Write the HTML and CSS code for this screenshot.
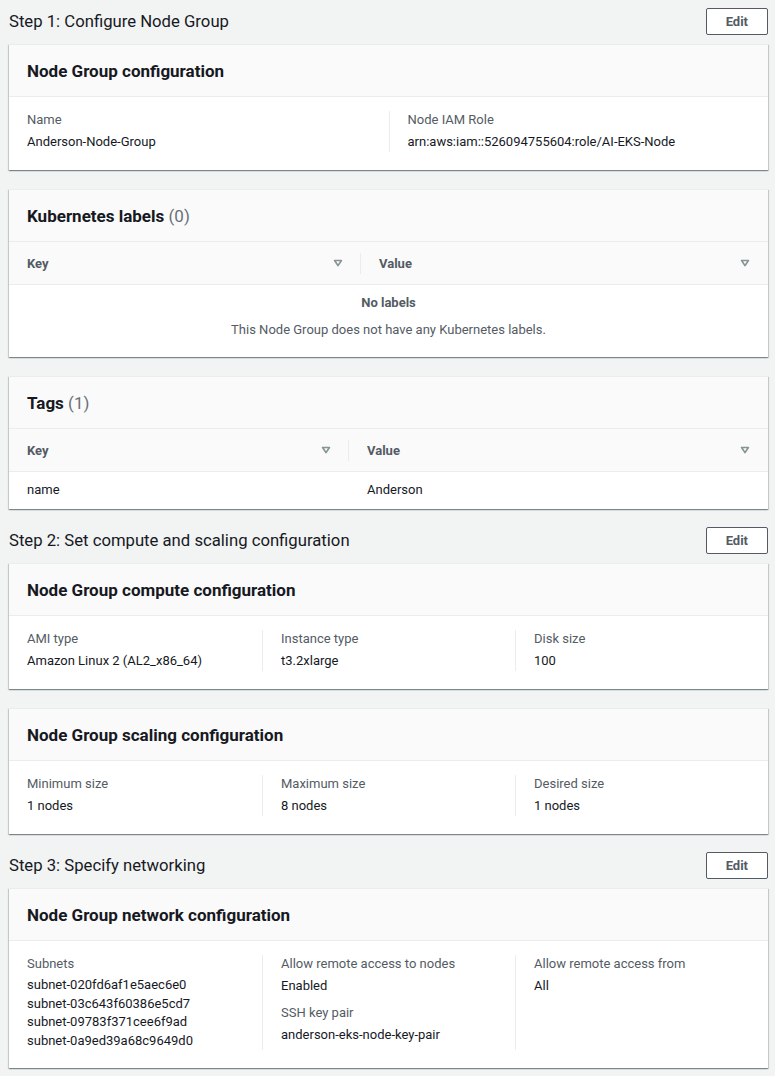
FILE: index.html
```html
<!DOCTYPE html>
<html lang="en">
<head>
<meta charset="utf-8">
<title>Review Node Group</title>
<link rel="stylesheet" href="styles.css">
</head>
<body>
<div class="page">

  <section class="step">
    <div class="step-head">
      <h2 class="step-title">Step 1: Configure Node Group</h2>
      <button class="btn">Edit</button>
    </div>
    <div class="cards">
      <div class="card">
        <div class="card-head"><h3 class="card-title">Node Group configuration</h3></div>
        <div class="cols cols-2">
          <div class="col">
            <div class="label">Name</div>
            <div class="value">Anderson-Node-Group</div>
          </div>
          <div class="col">
            <div class="label">Node IAM Role</div>
            <div class="value">arn:aws:iam::526094755604:role/AI-EKS-Node</div>
          </div>
        </div>
      </div>

      <div class="card">
        <div class="card-head"><h3 class="card-title">Kubernetes labels <span class="count">(0)</span></h3></div>
        <div class="table table-labels">
          <div class="trow thead">
            <div class="th">Key <svg class="sort" width="10" height="8" viewBox="0 0 10 8"><polygon points="1.6,1.5 8.4,1.5 5,6.6" fill="none" stroke="#879596" stroke-width="1.7" stroke-linejoin="round"/></svg></div>
            <div class="th">Value <svg class="sort" width="10" height="8" viewBox="0 0 10 8"><polygon points="1.6,1.5 8.4,1.5 5,6.6" fill="none" stroke="#879596" stroke-width="1.7" stroke-linejoin="round"/></svg></div>
          </div>
          <div class="empty">
            <div class="empty-title">No labels</div>
            <div class="empty-desc">This Node Group does not have any Kubernetes labels.</div>
          </div>
        </div>
      </div>

      <div class="card">
        <div class="card-head"><h3 class="card-title">Tags <span class="count">(1)</span></h3></div>
        <div class="table table-tags">
          <div class="trow thead">
            <div class="th">Key <svg class="sort" width="10" height="8" viewBox="0 0 10 8"><polygon points="1.6,1.5 8.4,1.5 5,6.6" fill="none" stroke="#879596" stroke-width="1.7" stroke-linejoin="round"/></svg></div>
            <div class="th">Value <svg class="sort" width="10" height="8" viewBox="0 0 10 8"><polygon points="1.6,1.5 8.4,1.5 5,6.6" fill="none" stroke="#879596" stroke-width="1.7" stroke-linejoin="round"/></svg></div>
          </div>
          <div class="trow">
            <div class="td">name</div>
            <div class="td">Anderson</div>
          </div>
        </div>
      </div>
    </div>
  </section>

  <section class="step">
    <div class="step-head">
      <h2 class="step-title">Step 2: Set compute and scaling configuration</h2>
      <button class="btn">Edit</button>
    </div>
    <div class="cards">
      <div class="card">
        <div class="card-head"><h3 class="card-title">Node Group compute configuration</h3></div>
        <div class="cols cols-3">
          <div class="col">
            <div class="label">AMI type</div>
            <div class="value">Amazon Linux 2 (AL2_x86_64)</div>
          </div>
          <div class="col">
            <div class="label">Instance type</div>
            <div class="value">t3.2xlarge</div>
          </div>
          <div class="col">
            <div class="label">Disk size</div>
            <div class="value">100</div>
          </div>
        </div>
      </div>

      <div class="card">
        <div class="card-head"><h3 class="card-title">Node Group scaling configuration</h3></div>
        <div class="cols cols-3">
          <div class="col">
            <div class="label">Minimum size</div>
            <div class="value">1 nodes</div>
          </div>
          <div class="col">
            <div class="label">Maximum size</div>
            <div class="value">8 nodes</div>
          </div>
          <div class="col">
            <div class="label">Desired size</div>
            <div class="value">1 nodes</div>
          </div>
        </div>
      </div>
    </div>
  </section>

  <section class="step">
    <div class="step-head">
      <h2 class="step-title">Step 3: Specify networking</h2>
      <button class="btn">Edit</button>
    </div>
    <div class="cards">
      <div class="card">
        <div class="card-head"><h3 class="card-title">Node Group network configuration</h3></div>
        <div class="cols cols-3">
          <div class="col">
            <div class="label">Subnets</div>
            <div class="value value-list">
              <div>subnet-020fd6af1e5aec6e0</div>
              <div>subnet-03c643f60386e5cd7</div>
              <div>subnet-09783f371cee6f9ad</div>
              <div>subnet-0a9ed39a68c9649d0</div>
            </div>
          </div>
          <div class="col">
            <div class="group">
              <div class="label">Allow remote access to nodes</div>
              <div class="value">Enabled</div>
            </div>
            <div class="group">
              <div class="label">SSH key pair</div>
              <div class="value">anderson-eks-node-key-pair</div>
            </div>
          </div>
          <div class="col">
            <div class="label">Allow remote access from</div>
            <div class="value">All</div>
          </div>
        </div>
      </div>
    </div>
  </section>

</div>
</body>
</html>
```

FILE: styles.css
```css
* {
  box-sizing: border-box;
}

body {
  margin: 0;
  background: #f2f3f3;
  font-family: Roboto, "Liberation Sans", sans-serif;
  font-size: 13px;
  color: #16191f;
}

.page {
  padding: 8px 7px 10px 9px;
}

.step + .step {
  margin-top: 18px;
}

.step-head {
  display: flex;
  align-items: center;
  justify-content: space-between;
  height: 27px;
  margin-bottom: 9px;
}

.step-title {
  margin: 0;
  font-size: 16.7px;
  font-weight: 400;
  line-height: 22px;
  color: #16191f;
}

.btn {
  height: 27px;
  padding: 0 19px;
  background: #fff;
  border: 1px solid #545b64;
  border-radius: 2px;
  font-family: Roboto, "Liberation Sans", sans-serif;
  font-size: 13px;
  font-weight: 700;
  line-height: 25px;
  color: #545b64;
}

.cards {
  display: flex;
  flex-direction: column;
  gap: 19px;
}

.card {
  background: #fff;
  border-top: 1px solid #eaeded;
  box-shadow: 0 1px 1px 0 rgba(0, 28, 36, 0.3), 1px 1px 1px 0 rgba(0, 28, 36, 0.15), -1px 1px 1px 0 rgba(0, 28, 36, 0.15);
}

.card-head {
  background: #fafafa;
  padding: 15px 18px 14px;
  border-bottom: 1px solid #eaeded;
}

.card-title {
  margin: 0;
  font-size: 17px;
  line-height: 22px;
  font-weight: 700;
  color: #16191f;
}

.count {
  font-weight: 400;
  color: #687078;
}

.cols {
  display: grid;
  padding: 14px 0 18px;
}

.cols-2 {
  grid-template-columns: 1fr 1fr;
}

.cols-3 {
  grid-template-columns: repeat(3, 1fr);
}

.col {
  padding: 0 18px;
}

.col + .col {
  border-left: 1px solid #eaeded;
}

.label {
  color: #545b64;
  line-height: 18px;
  margin-bottom: 3px;
}

.value {
  line-height: 20px;
}

.value-list {
  line-height: 18.5px;
}

.group + .group {
  margin-top: 8px;
}

.table-labels {
  --keyw: 352px;
}

.table-tags {
  --keyw: 340px;
}

.trow {
  display: grid;
  grid-template-columns: var(--keyw) 1fr;
}

.thead {
  background: #fafafa;
  border-bottom: 1px solid #eaeded;
}

.th {
  height: 42px;
  display: flex;
  align-items: center;
  justify-content: space-between;
  padding: 0 18px;
  font-weight: 700;
  color: #545b64;
}

.th:first-child {
  background: linear-gradient(#eaeded, #eaeded) right center / 1px 21px no-repeat;
}

.sort {
  display: block;
}

.td {
  padding: 8px 18px 9px;
  line-height: 20px;
}

.empty {
  text-align: center;
  padding: 8px 18px 17px;
  color: #545b64;
}

.empty-title {
  font-weight: 700;
  line-height: 20px;
}

.empty-desc {
  margin-top: 7px;
  line-height: 20px;
}
```
